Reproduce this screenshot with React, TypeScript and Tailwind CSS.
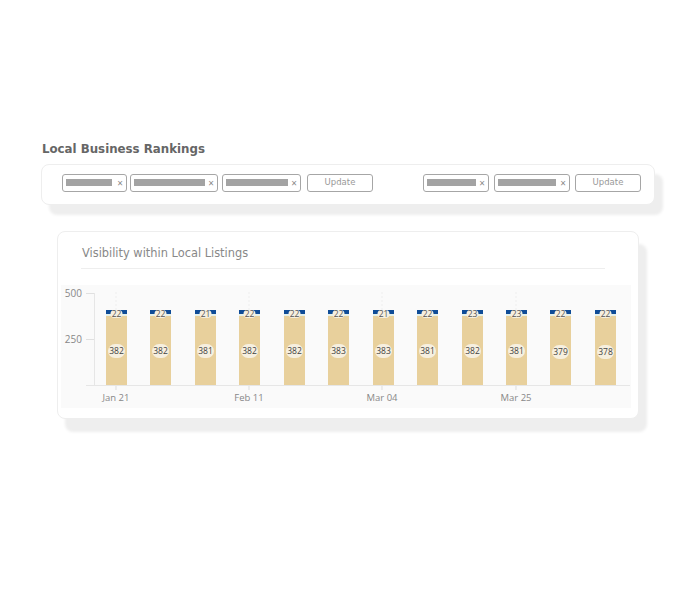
const font = { fontFamily: '"DejaVu Sans", sans-serif' }

const bars = [
  { x: 106, top: 22, bottom: 382, y: 351 },
  { x: 150, top: 22, bottom: 382, y: 351 },
  { x: 195, top: 21, bottom: 381, y: 351 },
  { x: 239, top: 22, bottom: 382, y: 351 },
  { x: 284, top: 22, bottom: 382, y: 351 },
  { x: 328, top: 22, bottom: 383, y: 351 },
  { x: 373, top: 21, bottom: 383, y: 351 },
  { x: 417, top: 22, bottom: 381, y: 351 },
  { x: 462, top: 23, bottom: 382, y: 351 },
  { x: 506, top: 23, bottom: 381, y: 351 },
  { x: 550, top: 22, bottom: 379, y: 352 },
  { x: 595, top: 22, bottom: 378, y: 352 },
]

const dates = [
  { x: 116, label: 'Jan 21' },
  { x: 249, label: 'Feb 11' },
  { x: 382, label: 'Mar 04' },
  { x: 516, label: 'Mar 25' },
]

// chart svg coordinates are page coordinates shifted by the svg's own origin
const ox = 61
const oy = 285

function Chip({ width, bar }: { width: number; bar: number }) {
  return (
    <div
      className="h-[18px] flex items-center justify-between pl-[3px] pr-[3px] border border-[#a6a6a6] rounded-[3px] bg-white"
      style={{ width }}
    >
      <div className="h-[7px] bg-[#a3a3a3]" style={{ width: bar }} />
      <span className="text-[10px] leading-none text-[#888]">×</span>
    </div>
  )
}

function UpdateButton() {
  return (
    <button
      type="button"
      className="block w-[66px] h-[18px] border border-[#a6a6a6] rounded-[3px] bg-white text-[8.5px] leading-none text-[#999]"
      style={font}
    >
      Update
    </button>
  )
}

function Chart() {
  return (
    <svg width="570" height="123" className="block ml-[3px]">
      <rect x="0" y="0" width="570" height="123" fill="#fafafa" />
      {dates.map(d => (
        <line key={d.x} x1={d.x - ox} x2={d.x - ox} y1={292 - oy} y2={385 - oy} stroke="#eee" strokeDasharray="2 2" />
      ))}
      <line x1={94.5 - ox} x2={94.5 - ox} y1={293 - oy} y2={385 - oy} stroke="#e6e6e6" />
      <line x1={86 - ox} x2={630 - ox} y1={385.5 - oy} y2={385.5 - oy} stroke="#e6e6e6" />
      <line x1={86 - ox} x2={94 - ox} y1={293.5 - oy} y2={293.5 - oy} stroke="#e0e0e0" />
      <line x1={86 - ox} x2={94 - ox} y1={339.5 - oy} y2={339.5 - oy} stroke="#e0e0e0" />
      <text x={82 - ox} y={297 - oy} textAnchor="end" fontSize="10" fill="#888">500</text>
      <text x={82 - ox} y={343 - oy} textAnchor="end" fontSize="10" fill="#888">250</text>
      {bars.map(b => (
        <g key={b.x}>
          <rect x={b.x - ox} y={316 - oy} width="21" height="69" fill="#e8d09c" />
          <rect x={b.x - ox} y={314 - oy} width="21" height="2" fill="#e4f0ea" />
          <rect x={b.x - ox} y={310 - oy} width="21" height="4" fill="#0f4c97" />
          <rect x={b.x + 4.5 - ox} y={310 - oy} width="12" height="8" rx="4" fill="#f5efe0" />
          <text x={b.x + 10.5 - ox} y={317 - oy} textAnchor="middle" fontSize="8.5" fill="#555">{b.top}</text>
          <rect x={b.x + 2 - ox} y={b.y - 7 - oy} width="17" height="14" rx="7" fill="#f6efdf" />
          <text x={b.x + 10.5 - ox} y={b.y + 3 - oy} textAnchor="middle" fontSize="8.5" fill="#444">{b.bottom}</text>
        </g>
      ))}
      {dates.map(d => (
        <g key={d.label}>
          <line x1={d.x - ox} x2={d.x - ox} y1={386 - oy} y2={390 - oy} stroke="#ddd" />
          <text x={d.x - ox} y={401 - oy} textAnchor="middle" fontSize="9.5" fill="#888">{d.label}</text>
        </g>
      ))}
    </svg>
  )
}

export default function App() {
  return (
    <div className="w-[694px] h-[616px] bg-white pt-[141px]" style={{ fontFamily: '"Open Sans", sans-serif' }}>
      <div className="ml-[42px] h-[16px] text-[11.8px] leading-[16px] font-bold text-[#666]" style={font}>
        Local Business Rankings
      </div>
      <div className="ml-[41px] mt-[7px] w-[614px] h-[41px] flex items-center pl-[20px] pb-[4px] bg-white border border-[#eee] rounded-[8px] shadow-[8px_10px_3px_#eee]">
        <div className="flex items-center gap-[3px]">
          <Chip width={65} bar={46} />
          <Chip width={88} bar={71} />
          <div className="ml-[1px]">
            <Chip width={79} bar={62} />
          </div>
        </div>
        <div className="ml-[6px]">
          <UpdateButton />
        </div>
        <div className="ml-[50px] flex items-center gap-[5px]">
          <Chip width={66} bar={49} />
          <Chip width={76} bar={58} />
          <UpdateButton />
        </div>
      </div>
      <div className="ml-[57px] mt-[26px] w-[582px] h-[188px] bg-white border border-[#eee] rounded-[8px] shadow-[8px_13px_3px_#eee]">
        <div className="ml-[23px] mr-[33px] h-[37px] pl-[1px] pt-[13px] text-[11.4px] leading-[17px] text-[#888] border-b border-[#eee]" style={font}>
          Visibility within Local Listings
        </div>
        <div className="mt-[16px]">
          <Chart />
        </div>
      </div>
    </div>
  )
}
